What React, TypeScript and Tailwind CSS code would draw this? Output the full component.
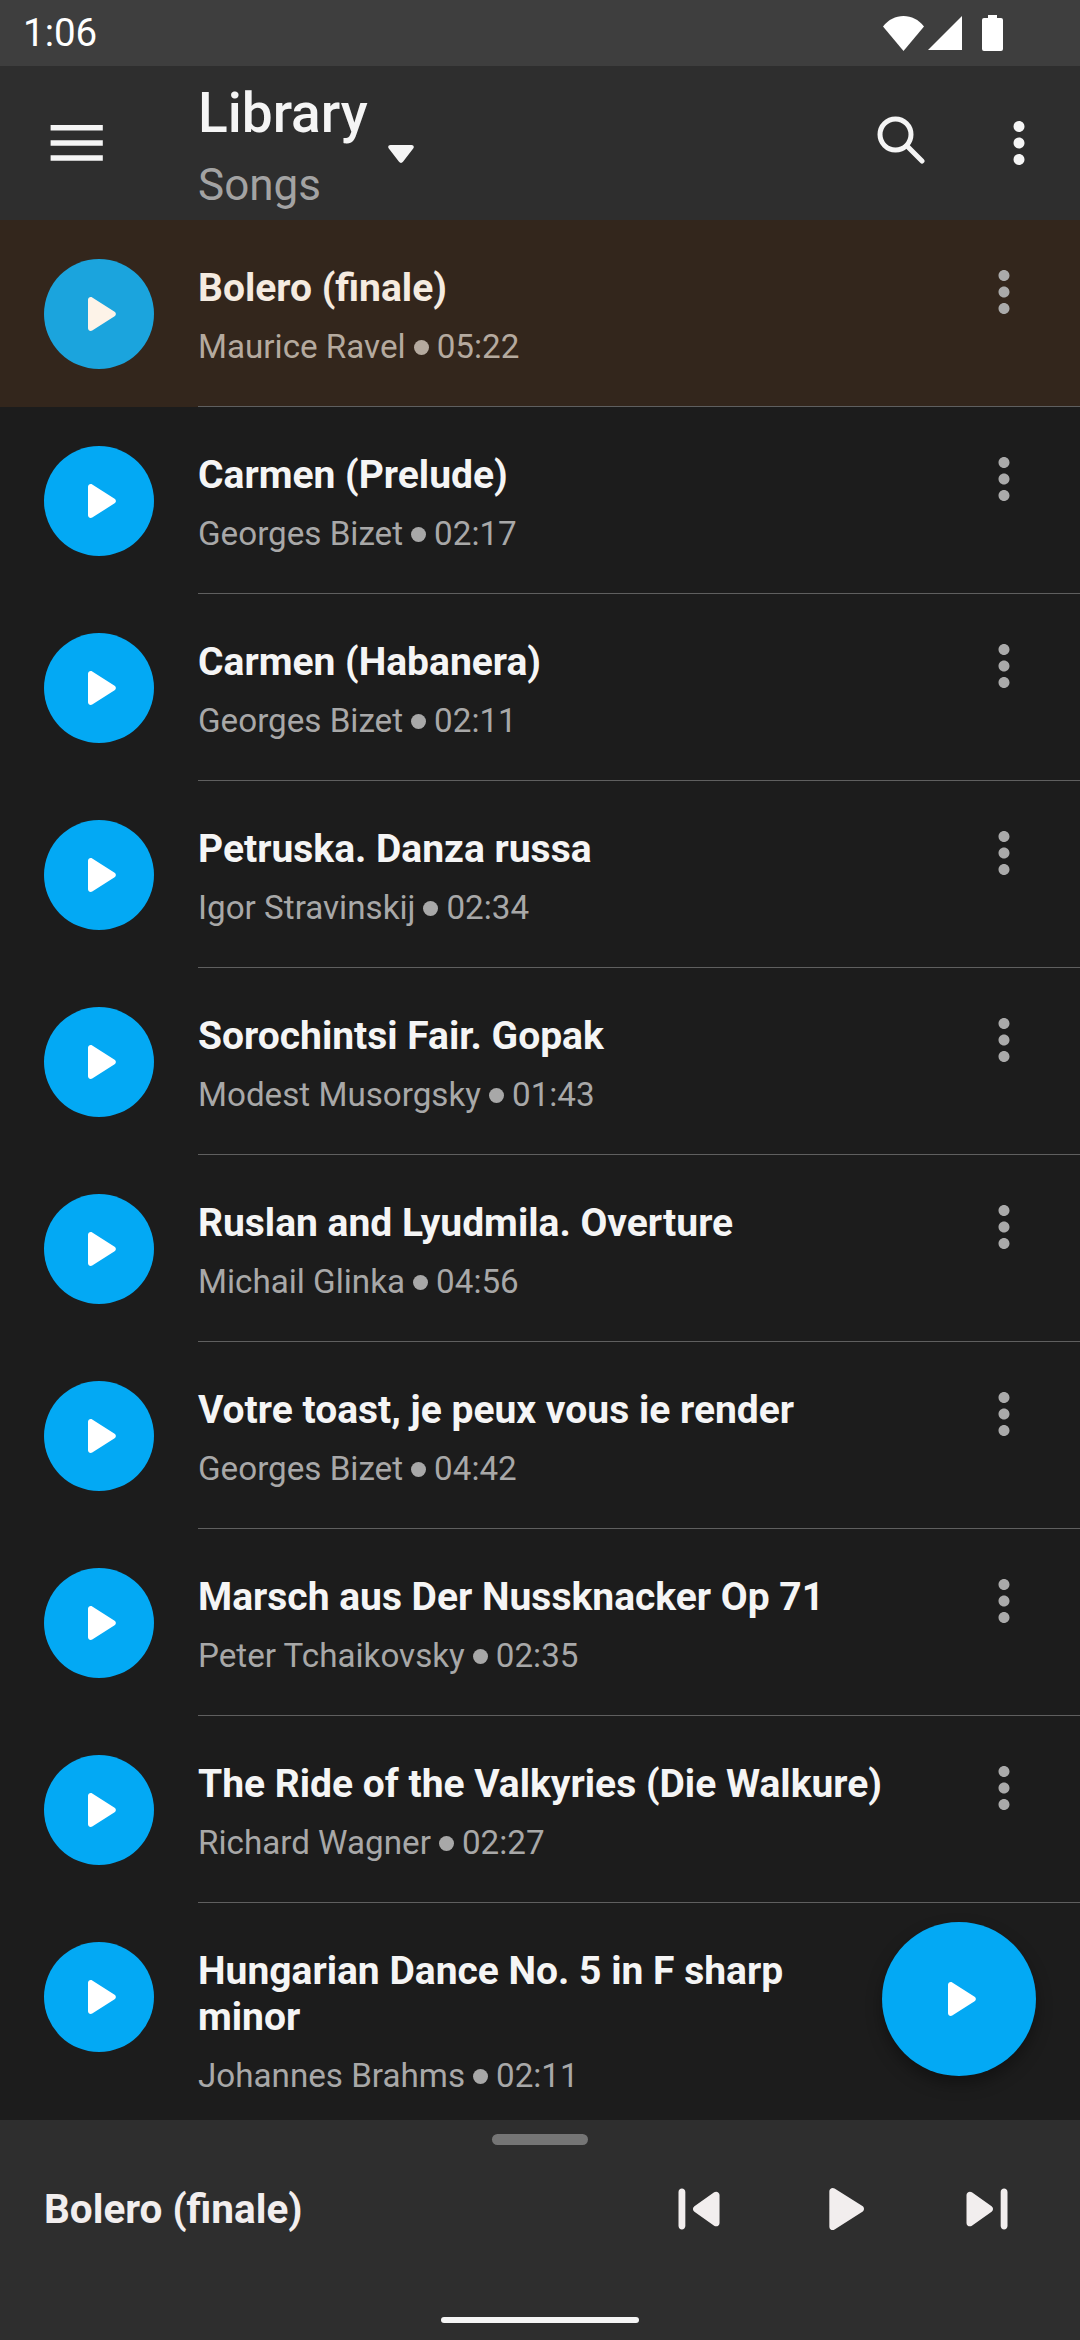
import React from 'react';

const songs = [
  { title: 'Bolero (finale)', artist: 'Maurice Ravel', time: '05:22', active: true },
  { title: 'Carmen (Prelude)', artist: 'Georges Bizet', time: '02:17' },
  { title: 'Carmen (Habanera)', artist: 'Georges Bizet', time: '02:11' },
  { title: 'Petruska. Danza russa', artist: 'Igor Stravinskij', time: '02:34' },
  { title: 'Sorochintsi Fair. Gopak', artist: 'Modest Musorgsky', time: '01:43' },
  { title: 'Ruslan and Lyudmila. Overture', artist: 'Michail Glinka', time: '04:56' },
  { title: 'Votre toast, je peux vous ie render', artist: 'Georges Bizet', time: '04:42' },
  { title: 'Marsch aus Der Nussknacker Op 71', artist: 'Peter Tchaikovsky', time: '02:35' },
  { title: 'The Ride of the Valkyries (Die Walkure)', artist: 'Richard Wagner', time: '02:27' },
  { title: 'Hungarian Dance No. 5 in F sharp minor', artist: 'Johannes Brahms', time: '02:11' },
];

const PLAY = 'M8 6.82v10.36c0 .79.87 1.27 1.54.84l8.14-5.18c.62-.39.62-1.29 0-1.69L9.54 5.98C8.87 5.55 8 6.03 8 6.82z';
const MORE = 'M12 8c1.1 0 2-.9 2-2s-.9-2-2-2-2 .9-2 2 .9 2 2 2zm0 2c-1.1 0-2 .9-2 2s.9 2 2 2 2-.9 2-2-.9-2-2-2zm0 6c-1.1 0-2 .9-2 2s.9 2 2 2 2-.9 2-2-.9-2-2-2z';
const PREV = 'M7 6c.55 0 1 .45 1 1v10c0 .55-.45 1-1 1s-1-.45-1-1V7c0-.55.45-1 1-1zm3.66 6.82l5.77 4.07c.66.47 1.58-.01 1.58-.82V7.93c0-.81-.91-1.28-1.58-.82l-5.77 4.07c-.57.4-.57 1.24 0 1.64z';
const NEXT = 'M7.58 16.89l5.77-4.07c.56-.4.56-1.24 0-1.63L7.58 7.11C6.91 6.65 6 7.12 6 7.93v8.14c0 .81.91 1.28 1.58.82zM16 7v10c0 .55.45 1 1 1s1-.45 1-1V7c0-.55-.45-1-1-1s-1 .45-1 1z';

const Icon = ({ d, className }: { d: string; className: string }) => (
  <svg viewBox="0 0 24 24" fill="currentColor" className={className}>
    <path d={d} />
  </svg>
);

const Row = ({ title, artist, time, active }: { title: string; artist: string; time: string; active?: boolean }) => (
  <div className={`flex shrink-0 ${active ? 'bg-[#33261c]' : ''}`}>
    <div className="w-[198px] shrink-0 pl-[44px] pt-[39px]">
      <div className={`flex h-[110px] w-[110px] items-center justify-center rounded-full ${active ? 'bg-[#1ba4dd] text-[#fdf3e8]' : 'bg-[#03a9f4] text-white'}`}>
        <Icon d={PLAY} className="h-[66px] w-[66px]" />
      </div>
    </div>
    <div className="flex min-h-[187px] flex-1 justify-between border-b border-[#5f5f5f] pr-[43px]">
      <div className="w-[688px] pt-[45px] pb-[36px]">
        <div className={`text-[39px] leading-[46px] font-bold ${active ? 'text-[#f5ebe0]' : 'text-[#f5f5f5]'}`}>{title}</div>
        <div className={`mt-[14px] flex items-center text-[33.2px] leading-[44px] ${active ? 'text-[#b5aa9f]' : 'text-[#a8a8a8]'}`}>
          <span>{artist}</span>
          <span className={`mx-[8px] h-[15px] w-[15px] rounded-full ${active ? 'bg-[#b5aa9f]' : 'bg-[#a8a8a8]'}`} />
          <span>{time}</span>
        </div>
      </div>
      <Icon d={MORE} className="mt-[39px] h-[66px] w-[66px] shrink-0 text-[#aaaaaa]" />
    </div>
  </div>
);

export default function App() {
  return (
    <div className="flex h-[2340px] w-[1080px] flex-col overflow-hidden bg-[#1c1c1c]" style={{ fontFamily: 'Roboto, sans-serif' }}>
      {/* Status bar */}
      <div className="flex h-[66px] shrink-0 items-center justify-between bg-[#3e3e3e] pr-[77px] pl-[23px] text-white">
        <span className="text-[38.5px] leading-none">1:06</span>
        <div className="flex items-center">
          <svg viewBox="0 0 41 35" fill="currentColor" className="h-[35px] w-[41px]">
            <path d="M0 10.5C5.5 3.5 12.5 0 20.5 0S35.5 3.5 41 10.5L20.5 35z" />
          </svg>
          <svg viewBox="0 0 34 34" fill="currentColor" className="ml-[4px] h-[34px] w-[34px]">
            <path d="M34 0v34H0z" />
          </svg>
          <svg viewBox="0 0 21 36" fill="currentColor" className="ml-[20px] h-[36px] w-[21px]">
            <path d="M6 0h9v3h4a2 2 0 0 1 2 2v29a2 2 0 0 1-2 2H2a2 2 0 0 1-2-2V5a2 2 0 0 1 2-2h4z" />
          </svg>
        </div>
      </div>

      {/* Toolbar */}
      <div className="flex h-[154px] shrink-0 items-center bg-[#2e2e2e] text-[#f5f5f5]">
        <svg viewBox="0 0 24 24" fill="currentColor" className="ml-[41px] h-[72px] w-[72px] shrink-0">
          <path d="M3.2 6h17.4v1.8H3.2zM3.2 11.1h17.4v1.8H3.2zM3.2 16.1h17.4v1.8H3.2z" />
        </svg>
        <div className="ml-[85px] flex flex-col pt-[4px]">
          <span className="text-[55px] leading-[64px] font-medium">Library</span>
          <span className="mt-[15px] text-[44px] leading-[50px] text-[#a3a3a3]">Songs</span>
        </div>
        <svg viewBox="0 0 26 18" fill="currentColor" className="mt-[22px] ml-[20px] h-[18px] w-[26px] shrink-0">
          <path d="M2.5 0h21c2 0 3 2 1.7 3.5L15 16.8c-1 1.5-3 1.5-4 0L.8 3.5C-.5 2 .5 0 2.5 0z" />
        </svg>
        <svg viewBox="0 0 48 48" fill="none" stroke="currentColor" className="mt-[-7px] ml-auto h-[48px] w-[48px] shrink-0">
          <circle cx="18.5" cy="18.5" r="15.5" strokeWidth="5" />
          <path d="M31 31l14 14" strokeWidth="5" strokeLinecap="round" />
        </svg>
        <Icon d={MORE} className="mr-[28px] ml-[61px] h-[66px] w-[66px] shrink-0" />
      </div>

      {/* Song list */}
      <div className="relative flex flex-1 flex-col overflow-hidden">
        {songs.map((s) => (
          <Row key={s.title} {...s} />
        ))}
        <div className="absolute right-[44px] bottom-[44px] flex h-[154px] w-[154px] items-center justify-center rounded-full bg-[#03a9f4] text-white shadow-[0_8px_16px_rgba(0,0,0,0.35)]">
          <Icon d={PLAY} className="h-[66px] w-[66px]" />
        </div>
      </div>

      {/* Mini player */}
      <div className="flex h-[220px] shrink-0 flex-col items-center bg-[#2e2e2e] pt-[14px]">
        <div className="h-[11px] w-[96px] rounded-full bg-[#757575]" />
        <div className="mt-[23px] flex h-[82px] w-full items-center pr-[52px] pl-[44px] text-[#f2eeee]">
          <span className="flex-1 text-[40.5px] font-bold">Bolero (finale)</span>
          <div className="flex gap-[62px]">
            <Icon d={PREV} className="h-[82px] w-[82px]" />
            <Icon d={PLAY} className="h-[82px] w-[82px]" />
            <Icon d={NEXT} className="h-[82px] w-[82px]" />
          </div>
        </div>
        <div className="mt-[67px] h-[6px] w-[198px] rounded-full bg-[#f5f5f5]" />
      </div>
    </div>
  );
}
